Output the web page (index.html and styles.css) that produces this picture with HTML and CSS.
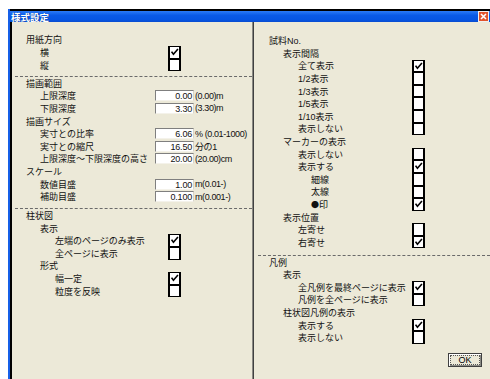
FILE: index.html
```html
<!DOCTYPE html>
<html lang="ja">
<head>
    <meta charset="UTF-8">
    <meta name="viewport" content="width=device-width, initial-scale=1.0">
    <title>様式設定</title>
    <link rel="stylesheet" href="styles.css">
</head>
<body>
<div class="window">
    <div class="titlebar">
        <span class="title">様式設定</span>
        <span class="close">
            <svg viewBox="0 0 9 9" width="9" height="9"><path d="M2 2 L7 7 M7 2 L2 7"/></svg>
        </span>
    </div>
    <div class="client">
        <!-- left side -->
        <div class="pane left">
            <div class="row"><span class="lbl i1">用紙方向</span></div>
            <div class="row"><span class="lbl i2">横</span><span class="cb on"><svg viewBox="0 0 8 8"><path d="M0.6 3.6 L2.6 6.4 L7.4 0.8"/></svg></span></div>
            <div class="row"><span class="lbl i2">縦</span><span class="cb"></span></div>
            <div class="sep"></div>

            <div class="row"><span class="lbl i1">描画範囲</span></div>
            <div class="row field"><span class="lbl i2">上限深度</span><span class="num">0.00</span><span class="unit">(0.00)m</span></div>
            <div class="row field"><span class="lbl i2">下限深度</span><span class="num">3.30</span><span class="unit">(3.30)m</span></div>
            <div class="row"><span class="lbl i1">描画サイズ</span></div>
            <div class="row field"><span class="lbl i2">実寸との比率</span><span class="num">6.06</span><span class="unit">% (0.01-1000)</span></div>
            <div class="row field"><span class="lbl i2">実寸との縮尺</span><span class="num">16.50</span><span class="unit">分の1</span></div>
            <div class="row field"><span class="lbl i2">上限深度～下限深度の高さ</span><span class="num">20.00</span><span class="unit">(20.00)cm</span></div>
            <div class="row"><span class="lbl i1">スケール</span></div>
            <div class="row field"><span class="lbl i2">数値目盛</span><span class="num">1.00</span><span class="unit">m(0.01-)</span></div>
            <div class="row field"><span class="lbl i2">補助目盛</span><span class="num">0.100</span><span class="unit">m(0.001-)</span></div>
            <div class="sep low"></div>

            <div class="row"><span class="lbl i1">柱状図</span></div>
            <div class="row"><span class="lbl i2">表示</span></div>
            <div class="row"><span class="lbl i3">左端のページのみ表示</span><span class="cb on"><svg viewBox="0 0 8 8"><path d="M0.6 3.6 L2.6 6.4 L7.4 0.8"/></svg></span></div>
            <div class="row"><span class="lbl i3">全ページに表示</span><span class="cb"></span></div>
            <div class="row"><span class="lbl i2">形式</span></div>
            <div class="row"><span class="lbl i3">幅一定</span><span class="cb on"><svg viewBox="0 0 8 8"><path d="M0.6 3.6 L2.6 6.4 L7.4 0.8"/></svg></span></div>
            <div class="row"><span class="lbl i3">粒度を反映</span><span class="cb"></span></div>
        </div>

        <div class="divider"></div>

        <!-- right side -->
        <div class="pane right">
            <div class="row"><span class="lbl i1">試料No.</span></div>
            <div class="row"><span class="lbl i2">表示間隔</span></div>
            <div class="row"><span class="lbl i3">全て表示</span><span class="cb on"><svg viewBox="0 0 8 8"><path d="M0.6 3.6 L2.6 6.4 L7.4 0.8"/></svg></span></div>
            <div class="row"><span class="lbl i3">1/2表示</span><span class="cb"></span></div>
            <div class="row"><span class="lbl i3">1/3表示</span><span class="cb"></span></div>
            <div class="row"><span class="lbl i3">1/5表示</span><span class="cb"></span></div>
            <div class="row"><span class="lbl i3">1/10表示</span><span class="cb"></span></div>
            <div class="row"><span class="lbl i3">表示しない</span><span class="cb"></span></div>
            <div class="row"><span class="lbl i2">マーカーの表示</span></div>
            <div class="row"><span class="lbl i3">表示しない</span><span class="cb"></span></div>
            <div class="row"><span class="lbl i3">表示する</span><span class="cb on"><svg viewBox="0 0 8 8"><path d="M0.6 3.6 L2.6 6.4 L7.4 0.8"/></svg></span></div>
            <div class="row"><span class="lbl i4">細線</span><span class="cb"></span></div>
            <div class="row"><span class="lbl i4">太線</span><span class="cb"></span></div>
            <div class="row"><span class="lbl i4"><span class="dot">●</span>印</span><span class="cb on"><svg viewBox="0 0 8 8"><path d="M0.6 3.6 L2.6 6.4 L7.4 0.8"/></svg></span></div>
            <div class="row"><span class="lbl i2">表示位置</span></div>
            <div class="row"><span class="lbl i3">左寄せ</span><span class="cb"></span></div>
            <div class="row"><span class="lbl i3">右寄せ</span><span class="cb on"><svg viewBox="0 0 8 8"><path d="M0.6 3.6 L2.6 6.4 L7.4 0.8"/></svg></span></div>
            <div class="sep"></div>

            <div class="row"><span class="lbl i1">凡例</span></div>
            <div class="row"><span class="lbl i2">表示</span></div>
            <div class="row"><span class="lbl i3">全凡例を最終ページに表示</span><span class="cb on"><svg viewBox="0 0 8 8"><path d="M0.6 3.6 L2.6 6.4 L7.4 0.8"/></svg></span></div>
            <div class="row"><span class="lbl i3">凡例を全ページに表示</span><span class="cb"></span></div>
            <div class="row"><span class="lbl i2">柱状図凡例の表示</span></div>
            <div class="row"><span class="lbl i3">表示する</span><span class="cb on"><svg viewBox="0 0 8 8"><path d="M0.6 3.6 L2.6 6.4 L7.4 0.8"/></svg></span></div>
            <div class="row"><span class="lbl i3">表示しない</span><span class="cb"></span></div>

            <div class="buttons">
                <button type="button" class="ok"><span>OK</span></button>
            </div>
        </div>
    </div>
</div>
</body>
</html>
```

FILE: styles.css
```css
body {
    margin: 0;
    background-color: #ffffff;
    font-family: "Liberation Sans", "Noto Sans CJK JP", sans-serif;
    font-size: 9px;
    color: #111;
    overflow: hidden;
}
.window {
    margin: 9px 0 0 8px;
    height: 370px;
    border-left: 2px solid #1760e8;
    overflow: hidden;
}
.titlebar {
    display: flex;
    align-items: center;
    height: 11px;
    border-top: 2px solid #000;
    background: linear-gradient(#2b7bf6, #0a5ae6 40%, #0655e2 80%, #0a4cd0);
    overflow: hidden;
}
.title {
    margin-left: 1px;
    color: #fff;
    font-size: 9.5px;
    font-weight: bold;
    font-family: "Noto Sans CJK JP", sans-serif;
    text-shadow: 1px 0 0 #0a3a9a;
}
.close {
    display: flex;
    margin-left: auto;
    margin-right: 1px;
    width: 9px;
    height: 9px;
    border: 1px solid #f0f0f0;
    background-color: #e2542c;
}
.close svg path {
    stroke: #fff;
    stroke-width: 1.6;
}
.client {
    display: flex;
    height: 357px;
    border-left: 2px solid #000;
    background-color: #ece9d8;
}
.pane {
    box-sizing: border-box;
    flex: none;
}
.left {
    width: 240px;
    padding-top: 11.7px;
}
.right {
    flex: 1;
    padding-top: 12.4px;
}
.divider {
    flex: none;
    width: 1px;
    border-left: 1px solid #8a8a84;
    background-color: #404040;
}
.row {
    display: flex;
    align-items: center;
    height: 12.6px;
}
.lbl {
    box-sizing: border-box;
    flex: none;
    white-space: nowrap;
}
.left .lbl { width: 156px; }
.left .field .lbl { width: 143px; }
.right .lbl { width: 158px; }
.i1 { padding-left: 14px; }
.i2 { padding-left: 28px; }
.i3 { padding-left: 43px; }
.right .i1 { padding-left: 15px; }
.right .i2 { padding-left: 29px; }
.right .i3 { padding-left: 44px; }
.right .i4 { padding-left: 57px; }
.dot {
    font-family: "Noto Sans CJK JP", sans-serif;
    font-size: 8px;
}

.cb {
    box-sizing: border-box;
    display: flex;
    width: 12.5px;
    height: 12.6px;
    padding: 1px 0 0 1px;
    border: solid #000;
    border-width: 1px 2px;
    background-color: #fff;
}
.cb svg {
    width: 8px;
    height: 8px;
}
.cb svg path {
    fill: none;
    stroke: #000;
    stroke-width: 1.7;
}
.num {
    box-sizing: border-box;
    width: 39px;
    height: 11px;
    padding-right: 1px;
    line-height: 10px;
    text-align: right;
    letter-spacing: -0.2px;
    background-color: #fff;
    border-top: 1px solid #7f7f7f;
    border-left: 1px solid #7f7f7f;
    border-right: 1px solid #d8d4c8;
    border-bottom: 1px solid #f4f2ea;
}
.unit {
    margin-left: 1px;
    white-space: nowrap;
    letter-spacing: -0.4px;
}
.sep {
    margin: 4.5px 0 0 3px;
    border-top: 1px dashed #6a6a6a;
}
.sep.low {
    margin-top: 5.3px;
}
.right .sep {
    margin: 6.4px 0 0 4px;
}
.buttons {
    display: flex;
    justify-content: flex-end;
    margin-top: 8.5px;
    padding-right: 8px;
}
.ok {
    box-sizing: border-box;
    width: 34px;
    height: 14px;
    padding: 1px;
    border: 1px solid #404040;
    background-color: #ece9d8;
    box-shadow: inset 1px 1px #ffffff, inset -1px -1px #8a8a84;
    font-family: inherit;
    font-size: 9px;
    color: #000;
}
.ok span {
    display: block;
    height: 100%;
    box-sizing: border-box;
    border: 1px dotted #555;
    line-height: 8px;
}
```
